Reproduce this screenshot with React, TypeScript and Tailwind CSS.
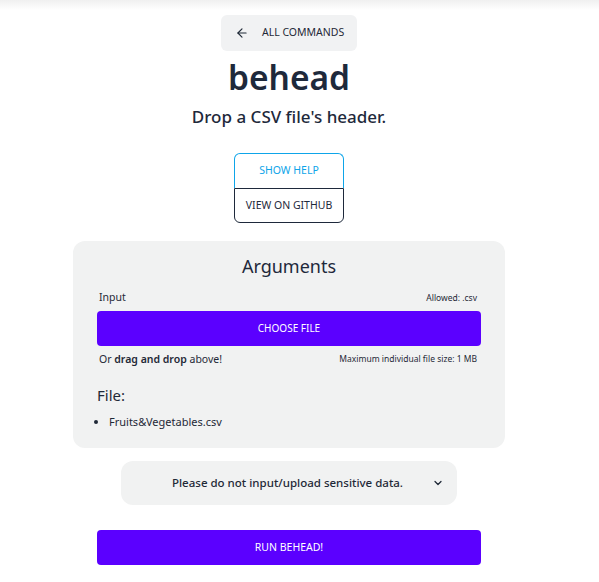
import React from "react";

export default function App() {
  return (
    <div className="min-h-[582px] bg-white text-[#1f2937]" style={{ fontFamily: '"Noto Sans", "Open Sans", sans-serif' }}>
      <div className="h-[10px] bg-gradient-to-b from-[#f0f0f0] to-white" />
      <div className="flex flex-col items-center pr-[21px]">
        <button className="mt-[5px] flex h-[36px] w-[136px] items-center gap-[13px] rounded-[6px] bg-[#f1f2f3] pl-[14px] text-[10.5px] uppercase text-[#1f2937]">
          <svg width="14" height="14" viewBox="0 0 24 24" fill="none" stroke="currentColor" strokeWidth="2" strokeLinecap="round" strokeLinejoin="round">
            <path d="M19 12H5" />
            <path d="M12 19l-7-7 7-7" />
          </svg>
          <span>All Commands</span>
        </button>
        <h1 className="mt-[4px] text-[33.5px] font-semibold leading-[44px] text-[#1e293b]">behead</h1>
        <p className="mt-[6px] text-[17px] font-medium leading-[24px] text-[#1e293b]">Drop a CSV file's header.</p>
        <div className="mt-[24px] flex w-[110px] flex-col">
          <button className="h-[35px] rounded-t-[6px] border border-b-0 border-[#0ea5e9] text-[10.5px] uppercase text-[#0ea5e9]">Show Help</button>
          <button className="h-[35px] rounded-b-[6px] border border-[#1e293b] text-[10.5px] uppercase text-[#1e293b]">View on GitHub</button>
        </div>
        <div className="mt-[18px] w-[432px] rounded-[12px] bg-[#f1f2f2] px-[24px] pb-[18px] pt-[12px]">
          <h2 className="text-center text-[18px] leading-[26px] text-[#1e293b]">Arguments</h2>
          <div className="mt-[11px] flex items-end justify-between px-[2px] pr-[4px]">
            <span className="text-[10.5px] leading-[14px]">Input</span>
            <span className="text-[8.5px] leading-[12px]">Allowed: .csv</span>
          </div>
          <button className="mt-[7px] h-[35px] w-full rounded-[4px] bg-[#5b00ff] text-[10px] uppercase text-white">Choose File</button>
          <div className="mt-[5px] flex items-center justify-between px-[2px] pr-[4px]">
            <span className="text-[10.5px] leading-[16px]">Or <b className="font-semibold">drag and drop</b> above!</span>
            <span className="text-[8.5px] leading-[12px]">Maximum individual file size: 1 MB</span>
          </div>
          <h3 className="mt-[18px] text-[15px] leading-[20px]">File:</h3>
          <ul className="mt-[9px] list-disc pl-[12px] text-[11px] leading-[16px]">
            <li>Fruits&amp;Vegetables.csv</li>
          </ul>
        </div>
        <div className="mt-[13px] flex h-[44px] w-[336px] items-center rounded-[12px] bg-[#f1f2f2] pl-[51px] pr-[13px]">
          <span className="flex-1 text-[11.5px] font-medium">Please do not input/upload sensitive data.</span>
          <svg width="12" height="12" viewBox="0 0 24 24" fill="none" stroke="currentColor" strokeWidth="2.5" strokeLinecap="round" strokeLinejoin="round">
            <path d="M6 9l6 6 6-6" />
          </svg>
        </div>
        <button className="mt-[25px] h-[35px] w-[384px] rounded-[4px] bg-[#5b00ff] text-[10.5px] uppercase text-white">Run behead!</button>
      </div>
    </div>
  );
}
